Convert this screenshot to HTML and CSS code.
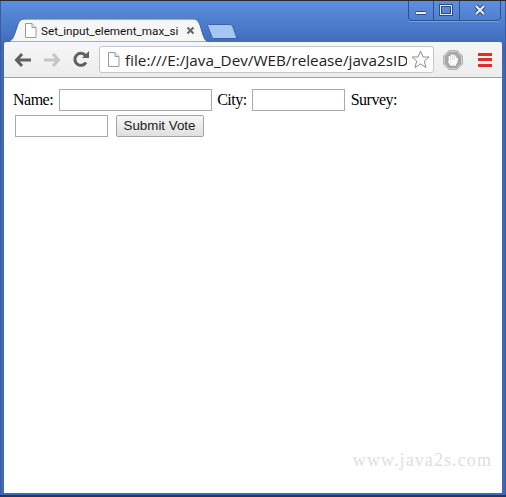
FILE: index.html
```html
<!DOCTYPE html>
<html lang="en">
<head>
<meta charset="utf-8">
<title>Set_input_element_max_size</title>
<link rel="stylesheet" href="styles.css">
</head>
<body>
<div class="window">
  <div class="caption">
    <span class="cap cap-min"><svg width="24" height="18" viewBox="0 0 24 18"><rect x="6.500" y="10.500" width="11" height="3" rx="1" fill="#e8eef8" stroke="#2f4a80"/></svg></span>
    <span class="cap cap-max"><svg width="25" height="18" viewBox="0 0 25 18"><rect x="6.500" y="4.500" width="11" height="9" fill="none" stroke="#2f4a80" stroke-width="3"/><rect x="6.500" y="4.500" width="11" height="9" fill="none" stroke="#e8eef8" stroke-width="1"/></svg></span>
    <span class="cap cap-close"><svg width="40" height="18" viewBox="0 0 40 18"><path d="M16 5l8 8M24 5l-8 8" stroke="#2f4a80" stroke-width="4"/><path d="M16 5l8 8M24 5l-8 8" stroke="#eef2fa" stroke-width="2"/></svg></span>
  </div>
  <div class="tabstrip">
    <div class="tab">
      <svg class="tab-bg" width="204" height="23" viewBox="0 0 204 23"><path d="M0 23C5 23 7 20 9 14L12 5C13 2 15 0 19 0H187C191 0 192 2 194 6L197 16C199 21 200 23 204 23Z" fill="#f6f6f6" stroke="#3c62a8" stroke-width="1"/></svg>
      <svg class="page-icon" width="13" height="15" viewBox="0 0 13 15"><path d="M1.500 .5H8L12 4.500V14.500H1.500Z" fill="#fff" stroke="#9a9a9a"/><path d="M8 .5V4.500H12" fill="#e8e8e8" stroke="#9a9a9a"/></svg>
      <span class="tab-title">Set_input_element_max_si</span>
      <svg class="tab-close" width="9" height="9" viewBox="0 0 9 9"><path d="M1.500 1.500l6 6M7.500 1.500l-6 6" stroke="#666" stroke-width="2"/></svg>
    </div>
    <svg class="newtab" width="31" height="15" viewBox="0 0 31 15"><path d="M.5 1.500C.5 1 1 .5 2 .5H22C24 .5 25 1 26 3L30 14.500H7C6 14.500 5.500 14 5 13Z" fill="#a6c6f2" stroke="#3c62a8"/></svg>
  </div>
  <div class="toolbar">
    <svg class="nav" width="18" height="16" viewBox="0 0 18 16"><path d="M8 2L2.500 8L8 14M3 8H17" fill="none" stroke="#606060" stroke-width="3"/></svg>
    <svg class="nav" width="18" height="16" viewBox="0 0 18 16"><path d="M10 2L15.500 8L10 14M15 8H1" fill="none" stroke="#c6c6c6" stroke-width="3"/></svg>
    <svg class="nav" width="18" height="17" viewBox="0 0 18 17"><path d="M14 11.500A6 6 0 1 1 13.500 4.500" fill="none" stroke="#606060" stroke-width="3"/><path d="M10 7H17V0Z" fill="#606060"/></svg>
    <div class="omnibox">
      <svg class="page-icon-small" width="13" height="15" viewBox="0 0 13 15"><path d="M1.500 .5H8L12 4.500V14.500H1.500Z" fill="#fff" stroke="#9a9a9a"/><path d="M8 .5V4.500H12" fill="#e8e8e8" stroke="#9a9a9a"/></svg>
      <span class="url">file:///E:/Java_Dev/WEB/release/java2sID</span>
      <svg class="star" width="19" height="19" viewBox="0 0 19 19"><path d="M9.500 1L12 7H18L13.300 11L15 17.500L9.500 14L4 17.500L5.700 11L1 7H7Z" fill="#fff" stroke="#8d8d8d"/></svg>
    </div>
    <svg class="stop" width="20" height="20" viewBox="0 0 20 20"><path d="M6 0H14L20 6V14L14 20H6L0 14V6Z" fill="#b5b5b5"/><path d="M6.500 1.500H13.500L18.500 6.500V13.500L13.500 18.500H6.500L1.500 13.500V6.500Z" fill="#a5a5a5" stroke="#cfcfcf"/><path d="M6.500 10V6M8.500 10V4.500M10.500 10V4.500M12.500 10V5.500M6.500 10L6 12L8 15H12L14 11V8" fill="none" stroke="#fff" stroke-width="1.600"/><path d="M7 10H13V14H8Z" fill="#fff"/></svg>
    <div class="menu"><span></span><span></span><span></span></div>
  </div>
  <main class="content">
    <form class="vote">
      <label>Name: <input class="name" type="text"></label>
      <label>City: <input class="field" type="text"></label>
      <label>Survey: <input class="field" type="text"></label>
      <button type="button">Submit Vote</button>
    </form>
    <div class="watermark">www.java2s.com</div>
  </main>
</div>
</body>
</html>
```
FILE: styles.css
```css
html, body {
  margin: 0;
  padding: 0;
  width: 506px;
  height: 497px;
  overflow: hidden;
}
.window {
  position: relative;
  box-sizing: border-box;
  width: 506px;
  height: 497px;
  padding: 0 4px 4px;
  display: flex;
  flex-direction: column;
  background: linear-gradient(#5f8fdc 0, #4e7fcf 20px, #3f69b8 45px, #3f69b8 100%);
  border-top: 1px solid #2b2b2b;
  box-shadow: inset 0 -2px 0 #24365c, inset 1px 0 0 #3a5c9e, inset -1px 0 0 #3a5c9e;
}
.caption {
  position: absolute;
  top: 0;
  right: 5px;
  display: flex;
  height: 19px;
  border: 1px solid #2f4f8c;
  border-top: 0;
  border-radius: 0 0 4px 4px;
  box-shadow: 0 1px 0 rgba(255,255,255,.25);
}
.cap { display: block; height: 19px; }
.cap svg { display: block; }
.cap-min { width: 24px; }
.cap-max { width: 25px; border-left: 1px solid #2f4f8c; border-right: 1px solid #2f4f8c; }
.cap-close { width: 40px; }
.tabstrip {
  height: 41px;
  display: flex;
  align-items: flex-end;
  box-sizing: border-box;
  padding-left: 2px;
}
.tab {
  position: relative;
  width: 204px;
  height: 23px;
  display: flex;
  align-items: center;
  font: 11.700px Roboto, "Liberation Sans", sans-serif;
  color: #111;
}
.tab-bg { position: absolute; left: 0; top: 0; }
.page-icon { position: relative; margin-left: 18px; flex: none; }
.tab-title {
  position: relative;
  margin-left: 4px;
  width: 137px;
  flex: none;
  white-space: nowrap;
}
.tab-close { position: relative; margin-left: 8px; flex: none; }
.newtab { margin: 0 0 3px -3px; flex: none; }
.toolbar {
  height: 36px;
  display: flex;
  align-items: center;
  background: linear-gradient(#f6f6f6, #ececec);
  border-bottom: 1px solid #a0a0a0;
  border-radius: 2px 2px 0 0;
  box-sizing: border-box;
  padding-left: 10px;
}
.nav { margin-right: 11px; flex: none; }
.omnibox {
  width: 335px;
  height: 27px;
  box-sizing: border-box;
  margin-left: -2px;
  display: flex;
  align-items: center;
  background: #fff;
  border: 1px solid #c6c6c6;
  border-radius: 3px;
  padding-left: 7px;
}
.page-icon-small { flex: none; }
.url {
  flex: 1;
  min-width: 0;
  margin-left: 5px;
  overflow: hidden;
  white-space: nowrap;
  font: 15.250px "Open Sans", "Liberation Sans", sans-serif;
  color: #222;
}
.star { flex: none; margin: 0 3px 0 4px; }
.stop { flex: none; margin-left: 9px; }
.menu {
  flex: none;
  margin-left: 15px;
  width: 14px;
  display: flex;
  flex-direction: column;
  gap: 2.500px;
}
.menu span { display: block; height: 3px; background: #e02d2a; }
.content {
  position: relative;
  flex: 1;
  background: #fff;
  padding: 9px 9px;
}
.vote {
  font: 16px/26px "Liberation Serif", serif;
  letter-spacing: -.5px;
  color: #000;
}
input {
  box-sizing: border-box;
  height: 22px;
  margin: 0 2px;
  padding: 1px 2px;
  border: 1px solid #aaa;
  background: #fff;
  vertical-align: 1px;
}
.name { width: 153px; }
.field { width: 93px; }
button {
  box-sizing: border-box;
  width: 88px;
  height: 22px;
  margin: 0 0 0 2px;
  padding: 0;
  border: 1px solid #a6a6a6;
  border-radius: 2px;
  background: linear-gradient(#f6f6f6, #e0e0e0);
  font: 13.333px "Liberation Sans", sans-serif;
  letter-spacing: 0;
  color: #222;
  vertical-align: 1px;
}
.watermark {
  position: absolute;
  right: 10px;
  bottom: 22px;
  font: 18px "Liberation Serif", serif;
  letter-spacing: 1.100px;
  color: #dedede;
}
```
